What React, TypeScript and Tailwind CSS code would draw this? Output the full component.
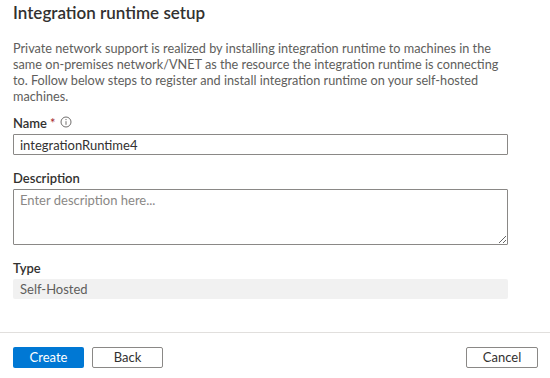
import { useState } from "react";

const App = () => {
  const [name, setName] = useState("integrationRuntime4");
  const [description, setDescription] = useState("");

  return (
    <div className="w-[550px] h-[378px] bg-white flex flex-col font-['Lato',sans-serif] text-[#323130] overflow-hidden">
      <div className="flex-1 px-[13px]">
        <h1 className="mt-[1px] text-[17px] leading-[24px] font-semibold text-[#323130]">
          Integration runtime setup
        </h1>
        <p className="mt-[15px] w-[490px] text-[12.7px] leading-[16px] text-[#605e5c]">
          Private network support is realized by installing integration runtime to machines in the
          same on-premises network/VNET as the resource the integration runtime is connecting
          to. Follow below steps to register and install integration runtime on your self-hosted
          machines.
        </p>

        <div className="mt-[11px] flex items-center gap-[3px] text-[13px] font-semibold leading-[16px]">
          <span>Name</span>
          <span className="text-[#a4262c] font-normal">*</span>
          <svg width="12" height="12" viewBox="0 0 12 12" className="ml-[1px] -mt-[3px]">
            <circle cx="6" cy="6" r="5" fill="none" stroke="#605e5c" strokeWidth="0.9" />
            <line x1="6" y1="5.2" x2="6" y2="8.8" stroke="#605e5c" strokeWidth="0.9" />
            <circle cx="6" cy="3.6" r="0.6" fill="#605e5c" />
          </svg>
        </div>
        <input
          value={name}
          onChange={(e) => setName(e.target.value)}
          className="mt-[3px] block w-[495px] h-[21px] border border-[#8a8886] rounded-[1px] px-[6px] text-[13px] text-[#323130] outline-none"
        />

        <div className="mt-[15px] text-[13px] font-semibold leading-[16px]">Description</div>
        <textarea
          value={description}
          onChange={(e) => setDescription(e.target.value)}
          placeholder="Enter description here..."
          className="mt-[3px] block w-[495px] h-[56px] border border-[#8a8886] rounded-[1px] px-[6px] py-[2px] text-[13px] leading-[16px] text-[#323130] placeholder:text-[#8a8886] outline-none"
        />

        <div className="mt-[15px] text-[13px] font-semibold leading-[16px]">Type</div>
        <div className="mt-[3px] w-[495px] h-[20px] bg-[#f1f1f1] rounded-[2px] px-[7px] text-[13px] leading-[20px] text-[#605e5c]">
          Self-Hosted
        </div>
      </div>

      <div className="border-t border-[#e1dfdd] h-[46px] px-[13px] flex items-start pt-[14px] gap-[8px]">
        <button className="w-[71px] h-[21px] bg-[#0078d4] rounded-[2px] text-white text-[13px] leading-[19px]">
          Create
        </button>
        <button className="w-[71px] h-[21px] border border-[#8a8886] rounded-[2px] bg-white text-[13px] leading-[19px] text-[#323130]">
          Back
        </button>
        <button className="ml-auto mr-[-1px] w-[72px] h-[21px] border border-[#8a8886] rounded-[2px] bg-white text-[13px] leading-[19px] text-[#323130]">
          Cancel
        </button>
      </div>
    </div>
  );
};

export default App;
